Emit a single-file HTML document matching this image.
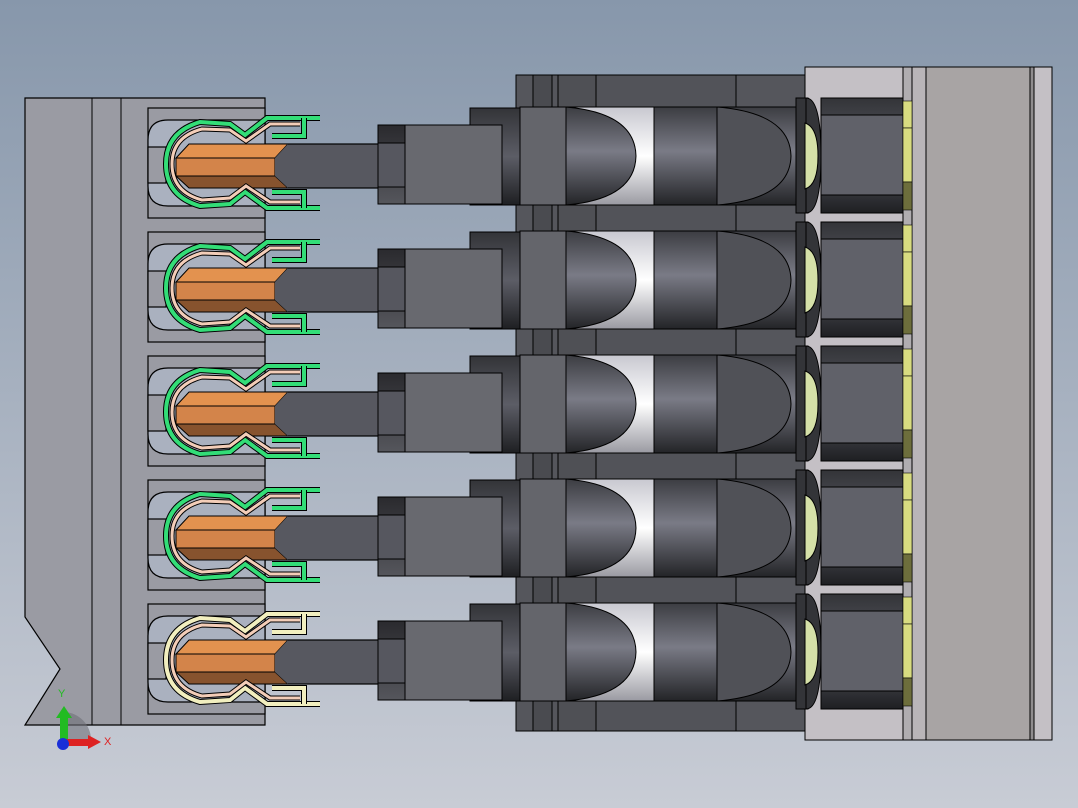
<!DOCTYPE html>
<html><head><style>html,body{margin:0;padding:0;width:1078px;height:808px;overflow:hidden}</style></head><body>
<svg width="1078" height="808" viewBox="0 0 1078 808" xmlns="http://www.w3.org/2000/svg" font-family="Liberation Sans, sans-serif">
<defs>
<linearGradient id="bg" x1="0" y1="0" x2="0" y2="1"><stop offset="0" stop-color="#8797ab"/><stop offset="1" stop-color="#c8ccd5"/></linearGradient>
<linearGradient id="cyl" x1="0" y1="0" x2="0" y2="1"><stop offset="0" stop-color="#3c3d42"/><stop offset="0.45" stop-color="#7a7b86"/><stop offset="1" stop-color="#232427"/></linearGradient>
<linearGradient id="cyl2" x1="0" y1="0" x2="0" y2="1"><stop offset="0" stop-color="#333438"/><stop offset="0.5" stop-color="#5c5d66"/><stop offset="1" stop-color="#1e1f22"/></linearGradient>
<linearGradient id="white" x1="0" y1="0" x2="0" y2="1"><stop offset="0" stop-color="#c8c8d0"/><stop offset="0.5" stop-color="#ffffff"/><stop offset="1" stop-color="#9a9aa2"/></linearGradient>
<linearGradient id="cap" x1="0" y1="0" x2="0" y2="1"><stop offset="0" stop-color="#2a2a2e"/><stop offset="1" stop-color="#55565c"/></linearGradient>
<g id="row">
 <rect x="148" y="-57" width="117" height="110" fill="#9a9ba3" stroke="#000" stroke-width="1.2"/>
 <path d="M168,-45 H265 V41 H168 Q148,41 148,21 V-25 Q148,-45 168,-45Z" fill="#aab1bf" stroke="#000" stroke-width="1.2"/>
 <rect x="148" y="-18" width="18" height="36" fill="#9a9ba3" stroke="#000" stroke-width="1.2"/>
 <rect x="265" y="-21" width="116" height="44" fill="#575860" stroke="#000" stroke-width="1.2"/>
 <path d="M176,-7 L189,-21 H288 L275,-7Z" fill="#e3924f" stroke="#000"/>
 <rect x="176" y="-7" width="99" height="18" fill="#d3844a" stroke="#000"/>
 <path d="M176,11 L189,23 H288 L275,11Z" fill="#87532e" stroke="#000"/>
 <path d="M275,-7 L288,-21 V23 L275,11Z" fill="#575860"/>
 <g fill="none" stroke-linejoin="miter">
  <path d="M320,-47 H267 L245,-30 L230,-41 L200,-43 Q166,-33 166,-1 Q166,31 200,41 L230,39 L245,27 L267,43 H320" stroke="#000" stroke-width="6"/>
  <path d="M320,-47 H267 L245,-30 L230,-41 L200,-43 Q166,-33 166,-1 Q166,31 200,41 L230,39 L245,27 L267,43 H320" stroke="var(--c)" stroke-width="4"/>
  <path d="M300,-41 H270 L246,-24 L230,-35 L202,-36 Q172,-28 172,-1 Q172,27 202,35 L230,33 L246,21 L270,37 H300" stroke="#000" stroke-width="5"/>
  <path d="M300,-41 H270 L246,-24 L230,-35 L202,-36 Q172,-28 172,-1 Q172,27 202,35 L230,33 L246,21 L270,37 H300" stroke="var(--c2)" stroke-width="3"/>
  <path d="M272,-29 H304 V-47 M272,27 H304 V43" stroke="#000" stroke-width="6"/>
  <path d="M272,-29 H304 V-47 M272,27 H304 V43" stroke="var(--c)" stroke-width="4"/>
 </g>
 <rect x="470" y="-57" width="50" height="97" fill="url(#cyl2)" stroke="#000"/>
 <rect x="378" y="-40" width="28" height="79" fill="url(#cap)" stroke="#000"/>
 <rect x="378" y="-22" width="28" height="44" fill="#56575f" stroke="#000"/>
 <rect x="405" y="-40" width="97" height="79" fill="#68696f" stroke="#000"/>
 <rect x="520" y="-58" width="46" height="98" fill="#64656b" stroke="#000"/>
 <rect x="566" y="-58" width="90" height="98" fill="url(#white)" stroke="#000"/>
 <path d="M566,-58 Q635,-52 636,-9 Q635,34 566,40Z" fill="url(#cyl)" stroke="#000"/>
 <rect x="654" y="-58" width="63" height="98" fill="url(#cyl)" stroke="#000"/>
 <rect x="717" y="-58" width="80" height="98" fill="url(#cyl)" stroke="#000"/>
 <path d="M717,-58 Q790,-52 791,-9 Q790,34 717,40Z" fill="#505157" stroke="#000"/>
 <rect x="796" y="-67" width="12" height="115" fill="#333438" stroke="#000"/>
 <path d="M806,-67 Q821,-67 821,-9 Q821,48 806,48Z" fill="#333438" stroke="#000"/>
 <path d="M805,-42 Q818,-38 818,-9 Q818,20 805,24Z" fill="#d5e0a8" stroke="#000"/>
 <rect x="821" y="-67" width="82" height="115" fill="url(#cyl2)" stroke="#000"/>
 <rect x="821" y="-50" width="82" height="80" fill="#606169" stroke="#000"/>
 <rect x="903" y="-64" width="9" height="27" fill="#d8dc80" stroke="#000" stroke-width=".6"/>
 <rect x="903" y="-37" width="9" height="54" fill="#d8dc80" stroke="#000" stroke-width=".6"/>
 <rect x="903" y="17" width="9" height="28" fill="#6d6e3c" stroke="#000" stroke-width=".6"/>
</g>
</defs>
<rect width="1078" height="808" fill="url(#bg)"/>
<path d="M25,98 H265 V725 H25 L60,669 L25,617Z" fill="#9a9ba3" stroke="#000" stroke-width="1.2"/>
<line x1="92" y1="98" x2="92" y2="725" stroke="#000"/>
<line x1="121" y1="98" x2="121" y2="725" stroke="#000"/>
<rect x="516" y="75" width="290" height="656" fill="#55565c" stroke="#000"/>
<rect x="533" y="75" width="19" height="656" fill="#4a4b50" stroke="#000"/>
<rect x="558" y="75" width="38" height="656" fill="#4f5055" stroke="#000"/>
<rect x="596" y="75" width="140" height="656" fill="#525359" stroke="#000"/>
<rect x="805" y="67" width="247" height="673" fill="#c4c0c5" stroke="#000"/>
<rect x="903" y="67" width="9" height="673" fill="#b0adb0" stroke="#000"/>
<rect x="912" y="67" width="14" height="673" fill="#b9b5b8" stroke="#000"/>
<rect x="926" y="67" width="104" height="673" fill="#a8a4a4" stroke="#000"/>
<rect x="1030" y="67" width="4" height="673" fill="#8f8c8e" stroke="#000"/>
<use href="#row" transform="translate(0,165)" style="--c:#33dd77;--c2:#f3cdb8"/>
<use href="#row" transform="translate(0,289)" style="--c:#33dd77;--c2:#f3cdb8"/>
<use href="#row" transform="translate(0,413)" style="--c:#33dd77;--c2:#f3cdb8"/>
<use href="#row" transform="translate(0,537)" style="--c:#33dd77;--c2:#f3cdb8"/>
<use href="#row" transform="translate(0,661)" style="--c:#f2efbf;--c2:#f3cdb8"/>
<path d="M64,712 A28,28 0 0 1 91,740 H64Z" fill="#707078" opacity="0.6"/>
<rect x="60" y="716" width="8" height="26" fill="#22bb22"/>
<path d="M56,718 L64,706 L72,718Z" fill="#22bb22"/>
<rect x="64" y="739" width="26" height="7" fill="#dd2222"/>
<path d="M88,735 L101,742 L88,749Z" fill="#dd2222"/>
<circle cx="63" cy="744" r="6" fill="#1a2fd8"/>
<text x="58" y="697" font-size="11" fill="#22bb22">Y</text>
<text x="104" y="745" font-size="11" fill="#dd2222">X</text>
</svg>
</body></html>
